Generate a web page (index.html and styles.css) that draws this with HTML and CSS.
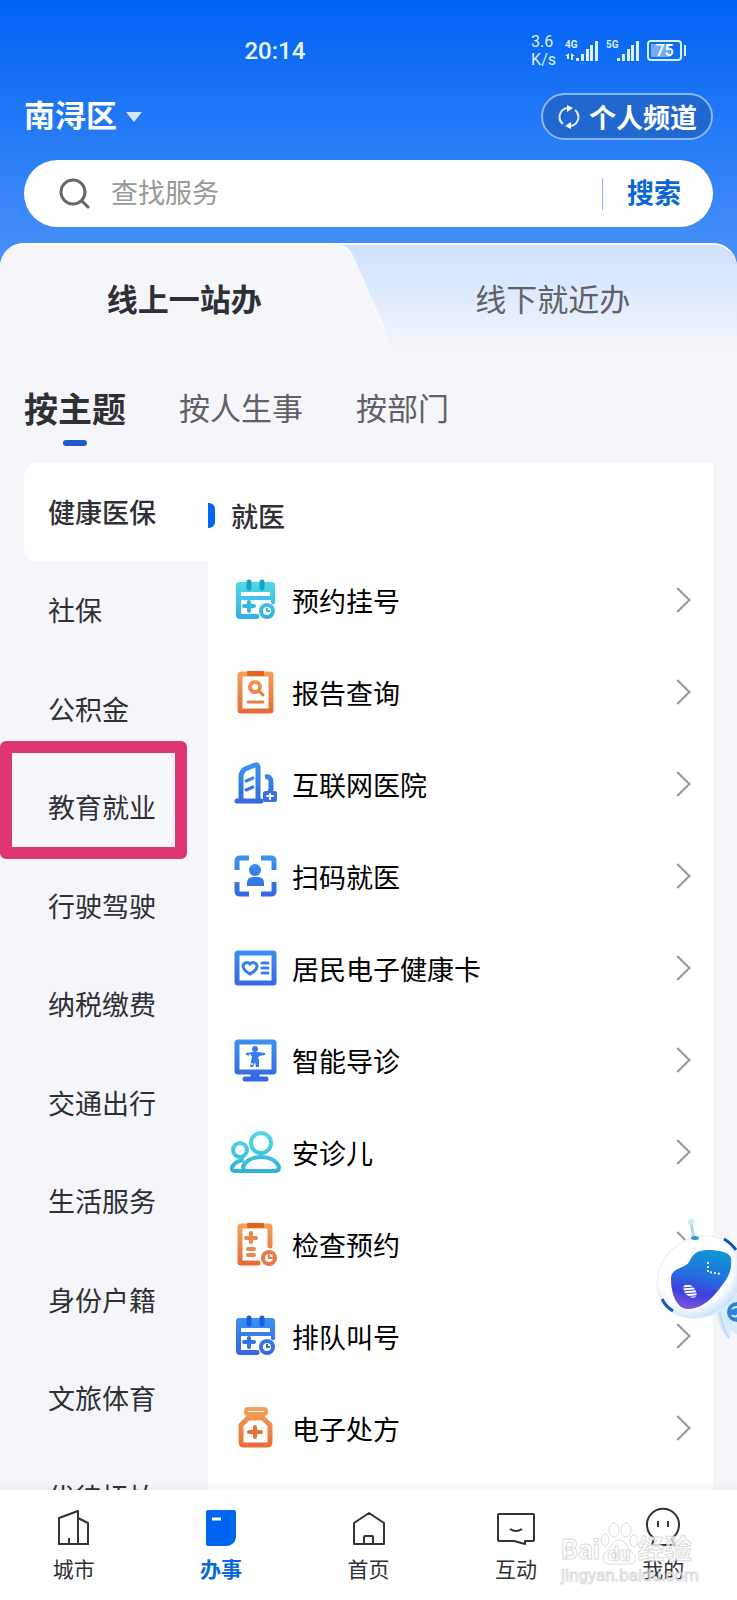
FILE: index.html
```html
<!DOCTYPE html>
<html lang="zh-CN">
<head>
    <meta charset="UTF-8">
    <meta name="viewport" content="width=device-width, initial-scale=1.0">
    <title>办事</title>
    <link rel="stylesheet" href="styles.css">
</head>
<body>
    <!-- Shared gradients and icon parts -->
    <svg class="defs" width="0" height="0" aria-hidden="true">
        <defs>
            <linearGradient id="cyan" gradientUnits="userSpaceOnUse" x1="0" y1="3" x2="0" y2="45">
                <stop offset="0" stop-color="#55dbe6"/><stop offset="1" stop-color="#2fb0dc"/>
            </linearGradient>
            <linearGradient id="orange" gradientUnits="userSpaceOnUse" x1="0" y1="3" x2="0" y2="45">
                <stop offset="0" stop-color="#f5a25a"/><stop offset="1" stop-color="#e8693a"/>
            </linearGradient>
            <linearGradient id="blue" gradientUnits="userSpaceOnUse" x1="0" y1="3" x2="0" y2="45">
                <stop offset="0" stop-color="#3a94ee"/><stop offset="1" stop-color="#3565e2"/>
            </linearGradient>
            <symbol id="calendar" viewBox="0 0 48 48">
                <path d="M8 6H41a3 3 0 0 1 3 3V25a2 2 0 0 1-4 2V24H10V38H26a2 2 0 0 1 0 5H9a4 4 0 0 1-4-4V9a3 3 0 0 1 3-3ZM10 16V20H39V16Z" fill-rule="evenodd"/>
                <path d="M18 26V35M13 30H23" stroke="currentColor" stroke-width="4" stroke-linecap="round"/>
                <circle cx="36" cy="35" r="8"/>
                <circle cx="36" cy="35" r="4" fill="#fff"/>
                <path d="M36 32V35H39" fill="none" stroke="currentColor" stroke-width="2"/>
            </symbol>
        </defs>
    </svg>

    <div class="app">
        <header class="header">
            <div class="status">
                <time class="clock">20:14</time>
                <div class="status-icons">
                    <div class="speed"><span>3.6</span><span>K/s</span></div>
                    <div class="signal">
                        <span>4G</span>
                        <svg width="34" height="24" viewBox="0 0 34 24" fill="#d9f1ff">
                            <path d="M0 17l4-3v6H2v-3ZM6 14l4 3H8v4H6Z"/>
                            <path d="M11 19h3v3h-3zM16 15h3v7h-3zM21 10h3v12h-3zM25 6h3v16h-3zM30 2h3v20h-3z"/>
                        </svg>
                    </div>
                    <div class="signal">
                        <span>5G</span>
                        <svg width="34" height="24" viewBox="0 0 34 24" fill="#d9f1ff">
                            <path d="M11 19h3v3h-3zM16 15h3v7h-3zM21 10h3v12h-3zM25 6h3v16h-3zM30 2h3v20h-3z"/>
                        </svg>
                    </div>
                    <div class="battery">75</div>
                </div>
            </div>

            <div class="location-row">
                <button class="location">南浔区</button>
                <button class="channel">
                    <svg width="22" height="26" viewBox="0 0 22 26" fill="none" stroke="#d9eaff" stroke-width="2">
                        <path d="M5 20A9 9 0 0 1 10 4M17 6A9 9 0 0 1 12 22"/>
                        <path d="M9 1l6 3-6 4ZM13 18l-6 4 6 3Z" fill="#fff" stroke="none"/>
                    </svg>
                    个人频道
                </button>
            </div>

            <form class="search">
                <svg width="32" height="32" viewBox="0 0 32 32" fill="none" stroke="#66666b" stroke-width="3" stroke-linecap="round">
                    <circle cx="14" cy="14" r="12"/><path d="M23 23l6 6"/>
                </svg>
                <input type="search" placeholder="查找服务" aria-label="查找服务">
                <button type="button">搜索</button>
            </form>
        </header>

        <main class="panel">
            <div class="tabs">
                <button class="tab active">
                    <svg class="slant" width="60" height="104" viewBox="0 0 60 104">
                        <path d="M0 0H4C13 0 17 5 20 12L60 104H0Z" fill="#f4f6fa"/>
                        <path d="M4 1C13 1 17 5 20 12L52 86" fill="none" stroke="#fff" stroke-width="2" stroke-opacity=".5"/>
                    </svg>
                    <span>线上一站办</span>
                </button>
                <button class="tab">线下就近办</button>
            </div>

            <div class="subtabs">
                <button class="subtab active">按主题</button>
                <button class="subtab">按人生事</button>
                <button class="subtab">按部门</button>
            </div>

            <div class="card">
                <ul class="side">
                    <li class="active"><a href="#">健康医保</a></li>
                    <li><a href="#">社保</a></li>
                    <li><a href="#">公积金</a></li>
                    <li class="marked"><a href="#">教育就业</a></li>
                    <li><a href="#">行驶驾驶</a></li>
                    <li><a href="#">纳税缴费</a></li>
                    <li><a href="#">交通出行</a></li>
                    <li><a href="#">生活服务</a></li>
                    <li><a href="#">身份户籍</a></li>
                    <li><a href="#">文旅体育</a></li>
                    <li><a href="#">优待抚恤</a></li>
                </ul>

                <section class="services">
                    <h2>就医</h2>
                    <a class="service" href="#">
                        <svg viewBox="0 0 48 48" fill="url(#cyan)" color="#32b9dd">
                            <use href="#calendar"/>
                            <path d="M18 6V12M31 6V12" stroke="#16a2c8" stroke-width="5" stroke-linecap="round"/>
                        </svg>
                        <span>预约挂号</span>
                    </a>
                    <a class="service" href="#">
                        <svg viewBox="0 0 48 48" fill="none" stroke="url(#orange)" stroke-width="5" stroke-linecap="round">
                            <rect x="9" y="6" width="31" height="37" rx="1"/>
                            <rect x="16" y="3" width="17" height="5" rx="1" fill="#e36420" stroke="none"/>
                            <circle cx="24" cy="19" r="5" stroke-width="4"/>
                            <path d="M28 23l4 4M17 34H32" stroke="#e98046" stroke-width="3"/>
                        </svg>
                        <span>报告查询</span>
                    </a>
                    <a class="service" href="#">
                        <svg viewBox="0 0 48 48" fill="none" stroke="url(#blue)" stroke-width="5" stroke-linecap="round" stroke-linejoin="round">
                            <path d="M10 40V16Q10 12 14 9L24 5Q27 4 27 8V40M6 41H30"/>
                            <path d="M15 21L22 18M15 30L22 27" stroke-width="3"/>
                            <path d="M34 17Q40 16 40 22V30" stroke-linecap="butt"/>
                            <path d="M35 31H37V29H42V31H44Q46 31 46 33V40Q46 42 44 42H34Q32 42 32 40V33Q32 31 35 31Z" fill="#3a6ee6" stroke="none"/>
                            <path d="M39 34V39M36 36H42" stroke="#fff" stroke-width="2"/>
                        </svg>
                        <span>互联网医院</span>
                    </a>
                    <a class="service" href="#">
                        <svg viewBox="0 0 48 48" fill="none" stroke="url(#blue)" stroke-width="5">
                            <path d="M18 6H9Q6 6 6 9V18M30 6H40Q43 6 43 9V18M6 30V39Q6 42 9 42H18M30 42H40Q43 42 43 39V30"/>
                            <g fill="url(#blue)" stroke="none">
                                <circle cx="24" cy="18" r="6"/>
                                <path d="M16 34V31Q16 25 22 25H27Q33 25 33 31V34Z"/>
                            </g>
                        </svg>
                        <span>扫码就医</span>
                    </a>
                    <a class="service" href="#">
                        <svg viewBox="0 0 48 48" fill="none" stroke="url(#blue)" stroke-width="5">
                            <rect x="6" y="9" width="37" height="30" rx="1"/>
                            <path d="M19 30Q12 26 12 22A4 4 0 0 1 19 20A4 4 0 0 1 26 22Q26 26 19 30Z" stroke-width="3"/>
                            <path d="M31 19H37M31 24H37M31 29H37" stroke="#3b7de9" stroke-width="3" stroke-linecap="round"/>
                        </svg>
                        <span>居民电子健康卡</span>
                    </a>
                    <a class="service" href="#">
                        <svg viewBox="0 0 48 48" fill="none" stroke="url(#blue)" stroke-width="5">
                            <rect x="6" y="6" width="37" height="30" rx="1"/>
                            <path d="M24 38V42" stroke="#3668e3" stroke-width="9"/>
                            <path d="M14 43H35" stroke="#3668e3" stroke-linecap="round"/>
                            <g fill="#377be9" stroke="none">
                                <circle cx="24" cy="13" r="3"/>
                                <path d="M15 17L22 16H27L34 17V19L28 20L28 31H25L24 26L22 31H19L21 20L15 19Z"/>
                                <circle cx="19" cy="19" r="1" fill="#fff"/>
                                <circle cx="28" cy="22" r="1" fill="#fff"/>
                                <circle cx="21" cy="28" r="1" fill="#fff"/>
                            </g>
                        </svg>
                        <span>智能导诊</span>
                    </a>
                    <a class="service" href="#">
                        <svg viewBox="0 0 48 48" fill="none" stroke="url(#cyan)" stroke-width="4">
                            <circle cx="30" cy="15" r="10"/>
                            <path d="M17 43H44Q48 43 48 39C46 33 39 29 30 29S14 33 12 39Q12 43 17 43Z"/>
                            <circle cx="9" cy="22" r="7"/>
                            <path d="M14 43H4Q0 43 1 39Q4 33 13 32"/>
                        </svg>
                        <span>安诊儿</span>
                    </a>
                    <a class="service" href="#">
                        <svg viewBox="0 0 48 48" fill="none" stroke="url(#orange)" stroke-width="5" stroke-linecap="round">
                            <path d="M27 43H10Q9 43 9 42V7Q9 6 10 6H38Q39 6 39 7V26"/>
                            <rect x="16" y="3" width="17" height="5" rx="1" fill="#e36420" stroke="none"/>
                            <path d="M20 13V22M15 18H25M17 29H23M17 35H23" stroke="#ea864a" stroke-width="4"/>
                            <circle cx="38" cy="38" r="8" fill="#ea7a44" stroke="none"/>
                            <circle cx="38" cy="38" r="4" fill="#fff" stroke="none"/>
                            <path d="M38 35V38H41" stroke="#ea7a44" stroke-width="2"/>
                        </svg>
                        <span>检查预约</span>
                    </a>
                    <a class="service" href="#">
                        <svg viewBox="0 0 48 48" fill="url(#blue)" color="#3870e6">
                            <use href="#calendar"/>
                            <path d="M18 6V12M31 6V12" stroke="#1f5bdc" stroke-width="5" stroke-linecap="round"/>
                        </svg>
                        <span>排队叫号</span>
                    </a>
                    <a class="service" href="#">
                        <svg viewBox="0 0 48 48" fill="none" stroke="url(#orange)" stroke-width="4" stroke-linejoin="round">
                            <rect x="15" y="5" width="20" height="5" rx="2"/>
                            <path d="M17 14H32L39 21V38Q39 41 36 41H13Q10 41 10 38V21Z" stroke-width="5"/>
                            <path d="M24 23V33M18 28H30" stroke="#e8703a" stroke-linecap="round"/>
                        </svg>
                        <span>电子处方</span>
                    </a>
                </section>
            </div>

            <!-- Floating assistant, half off screen -->
            <button class="robot" aria-label="智能助手">
                <svg width="82" height="134" viewBox="0 0 82 134">
                    <defs>
                        <radialGradient id="shell" cx=".5" cy=".4" r=".6">
                            <stop offset=".7" stop-color="#fff"/><stop offset="1" stop-color="#c5dffa"/>
                        </radialGradient>
                        <linearGradient id="face" x1=".6" y1="0" x2=".4" y2="1">
                            <stop offset="0" stop-color="#0d96d8"/><stop offset=".5" stop-color="#2867df"/>
                            <stop offset=".75" stop-color="#403fdc"/><stop offset="1" stop-color="#7855dc"/>
                        </linearGradient>
                        <pattern id="stripes" width="3" height="3" patternUnits="userSpaceOnUse" patternTransform="rotate(-50)">
                            <path d="M0 1H3" stroke="#fff" stroke-width="2"/>
                        </pattern>
                    </defs>
                    <path d="M58 84Q60 110 72 122L74 112L82 118V66Z" fill="#d9eafb"/>
                    <path d="M62 90Q65 110 72 120" fill="none" stroke="#c0daf6" stroke-width="2"/>
                    <circle cx="80" cy="94" r="10" fill="#2a83dc"/>
                    <path d="M75 91q5-4 7 0M75 97q4 4 7-2" fill="none" stroke="#d5ecff" stroke-width="2"/>
                    <path d="M37 22L34 4" stroke="#a9dcf1" stroke-width="3"/>
                    <circle cx="34" cy="4" r="3" fill="#c7eaf8"/>
                    <ellipse cx="43" cy="59" rx="45" ry="39" transform="rotate(-38 43 59)" fill="url(#shell)" stroke="#e3effc"/>
                    <ellipse cx="38" cy="20" rx="4" ry="2" fill="#399bd0"/>
                    <path d="M67 21Q74 25 79 32" fill="none" stroke="#1851b0" stroke-width="3"/>
                    <path d="M5 81Q9 89 16 93" fill="none" stroke="#1d5aa8" stroke-width="3"/>
                    <path d="M74 40C73 34 60 32 52 32C38 32 36 37 32 44C28 51 14 49 14 61C14 76 20 92 32 91C48 90 58 77 66 66C73 57 75 50 74 40Z" fill="url(#face)"/>
                    <path d="M51 44V54L64 56" fill="none" stroke="#dff5ff" stroke-width="2" stroke-dasharray="2 2"/>
                    <ellipse cx="33" cy="73" rx="8" ry="5" transform="rotate(45 33 73)" fill="url(#stripes)"/>
                </svg>
            </button>
        </main>

        <nav class="navbar">
            <a href="#">
                <svg viewBox="0 0 40 40">
                    <path d="M5 36V11L24 4V36M24 11L34 16V36M4 37H35M15 36V31"/>
                </svg>
                城市
            </a>
            <a class="active" href="#">
                <svg viewBox="0 0 40 40">
                    <path d="M7 3H33Q35 3 35 5V30Q34 38 26 39H7Q5 39 5 37V5Q5 3 7 3Z" fill="#0065ee" stroke="none"/>
                    <path d="M11 12H20" stroke="#fff" stroke-width="3"/>
                </svg>
                办事
            </a>
            <a href="#">
                <svg viewBox="0 0 40 40">
                    <path d="M5 37V16L20 6L35 16V37ZM15 37V30Q15 29 16 29H23Q24 29 24 30V37"/>
                </svg>
                首页
            </a>
            <a href="#">
                <svg viewBox="0 0 40 40">
                    <path d="M3 7H37Q38 7 38 8V33Q38 34 37 34H29V37L18 34H3Q2 34 2 33V8Q2 7 3 7ZM14 22Q20 26 26 22"/>
                </svg>
                互动
            </a>
            <a href="#">
                <svg viewBox="0 0 40 40">
                    <path d="M11 31A16 16 0 1 1 29 31L31 38H9ZM15 14V20M25 14V20"/>
                </svg>
                我的
            </a>
            <div class="watermark" aria-hidden="true">
                <div class="watermark-brand">
                    <span>Bai</span>
                    <span class="paw">
                        <svg width="38" height="44" viewBox="0 0 38 44">
                            <ellipse cx="5" cy="18" rx="4" ry="6"/><ellipse cx="14" cy="8" rx="5" ry="7"/>
                            <ellipse cx="26" cy="8" rx="5" ry="7"/><ellipse cx="34" cy="19" rx="4" ry="6"/>
                            <path d="M19 18C12 18 11 27 6 30C1 35 3 42 9 42H30C37 42 37 34 32 30C27 26 26 18 19 18Z"/>
                        </svg>
                        <b>du</b>
                    </span>
                    <span>经验</span>
                </div>
                <div class="watermark-url">jingyan.baidu.com</div>
            </div>
        </nav>
    </div>
</body>
</html>
```
FILE: styles.css
```css
* {
    margin: 0;
    padding: 0;
    box-sizing: border-box;
}

body {
    background-color: #f4f6fa;
    color: #2f3035;
    font-family: Roboto, 'Noto Sans CJK SC', sans-serif;
    font-size: 27px;
}

button,
input {
    font: inherit;
    color: inherit;
    background: none;
    border: none;
}

a {
    color: inherit;
    text-decoration: none;
}

.defs {
    position: absolute;
}

.app {
    height: 100vh;
    display: flex;
    flex-direction: column;
    overflow: hidden;
}

/* Header */
.header {
    background: linear-gradient(#0062f4, #4b92f8);
    color: #fff;
    padding: 0 24px 40px;
}

.status {
    height: 93px;
    display: flex;
    justify-content: space-between;
    align-items: center;
    padding: 8px 26px 0 32%;
}

.clock {
    font-size: 24px;
    font-weight: 500;
    line-height: 28px;
    color: #e6f8ff;
}

.status-icons {
    display: flex;
    align-items: center;
    gap: 7px;
    color: #d9f1ff;
}

.speed {
    display: flex;
    flex-direction: column;
    margin-right: 2px;
    font-size: 16px;
    line-height: 18px;
}

.signal {
    position: relative;
    height: 24px;
}

.signal svg {
    display: block;
}

.signal span {
    position: absolute;
    top: 0;
    left: 0;
    font-size: 10px;
    font-weight: bold;
    line-height: 12px;
}

.battery {
    position: relative;
    width: 35px;
    height: 21px;
    margin-right: 5px;
    border: 2px solid #d9f1ff;
    border-radius: 4px;
    background: linear-gradient(90deg, #75abfa 70%, transparent 70%) content-box;
    padding: 2px;
    color: #fff;
    font-size: 16px;
    font-weight: 500;
    line-height: 14px;
    text-align: center;
}

.battery::after {
    content: '';
    position: absolute;
    right: -6px;
    top: 3px;
    width: 2px;
    height: 11px;
    background: #d9f1ff;
}

.location-row {
    display: flex;
    justify-content: space-between;
    align-items: center;
    margin-bottom: 20px;
}

.location {
    display: flex;
    align-items: center;
    gap: 9px;
    font-size: 31px;
    font-weight: bold;
    line-height: 47px;
}

.location::after {
    content: '';
    border: 8px solid transparent;
    border-top: 10px solid #cfe6ff;
    border-bottom: 0;
}

.channel {
    display: flex;
    align-items: center;
    gap: 9px;
    height: 47px;
    padding: 0 14px 0 15px;
    border: 2px solid #86b7f7;
    border-radius: 24px;
    background: #2067cf;
    font-weight: bold;
}

.search {
    display: flex;
    align-items: center;
    height: 67px;
    padding: 0 8px 0 35px;
    border-radius: 34px;
    background: #fff;
}

.search input {
    flex: 1;
    min-width: 0;
    margin-left: 20px;
    outline: none;
}

.search input::placeholder {
    color: #999;
}

.search button {
    height: 32px;
    padding: 0 24px;
    border-left: 1px solid #8db8ef;
    color: #0a66d4;
    font-weight: bold;
    line-height: 32px;
}

/* Content */
.panel {
    position: relative;
    flex: 1;
    min-height: 0;
    display: flex;
    flex-direction: column;
    margin-top: -24px;
    border-radius: 24px 24px 0 0;
    background: #f4f6fa;
    overflow: hidden;
}

.tabs {
    display: flex;
    flex-shrink: 0;
    height: 106px;
    border-top: 2px solid #fff;
    border-radius: 24px 24px 0 0;
    background: linear-gradient(#cfe1fb, #dbe8fd 40%, #f4f6fa);
}

.tab {
    position: relative;
    flex: 1;
    font-size: 31px;
    color: #606166;
}

.tab.active {
    color: #2f3035;
    font-weight: bold;
}

.tab.active::before {
    content: '';
    position: absolute;
    inset: 0 36px 0 0;
    background: #f4f6fa;
}

.tab span {
    position: relative;
}

.slant {
    position: absolute;
    top: 0;
    right: -24px;
}

.subtabs {
    display: flex;
    flex-shrink: 0;
    align-items: center;
    gap: 53px;
    height: 114px;
    padding: 8px 24px 0;
}

.subtab {
    position: relative;
    font-size: 31px;
    line-height: 48px;
    color: #606166;
}

.subtab.active {
    font-size: 34px;
    font-weight: bold;
    color: #2f3035;
}

.subtab.active::after {
    content: '';
    position: absolute;
    left: 50%;
    bottom: -12px;
    width: 24px;
    height: 6px;
    margin-left: -12px;
    border-radius: 3px;
    background: #2457c8;
}

.card {
    display: flex;
    align-items: flex-start;
    margin: 0 24px;
}

.side {
    width: 184px;
    list-style: none;
    display: grid;
    grid-auto-rows: 98px 99px;
}

.side li {
    position: relative;
    padding: 0 0 2px 24px;
    display: flex;
    align-items: center;
}

.side .active {
    background: #fff;
    border-radius: 12px 0 0 12px;
    font-weight: 500;
}

/* Highlight frame around one category */
.marked::after {
    content: '';
    position: absolute;
    inset: -17px 21px -2px -24px;
    border: 12px solid #dc3571;
    border-radius: 6px;
}

.services {
    flex: 1;
    align-self: stretch;
    background: #fff;
    border-radius: 0 4px 0 0;
}

.services h2 {
    position: relative;
    height: 91px;
    padding: 20px 0 0 23px;
    font-size: 27px;
    font-weight: 500;
    line-height: 71px;
}

.services h2::before {
    content: '';
    position: absolute;
    left: 0;
    top: 40px;
    width: 7px;
    height: 25px;
    border-radius: 0 6px 6px 0;
    background: #0065f2;
}

.service {
    display: flex;
    align-items: center;
    height: 92px;
    padding: 0 26px 0 23px;
    color: #000;
}

.service svg {
    width: 48px;
    height: 48px;
    margin-right: 13px;
    overflow: visible;
}

.service::after {
    content: '';
    width: 16px;
    height: 16px;
    margin-left: auto;
    border: solid #999;
    border-width: 2px 2px 0 0;
    transform: rotate(45deg);
}

.robot {
    position: absolute;
    right: -2px;
    bottom: 138px;
}

.robot svg {
    display: block;
    overflow: visible;
}

/* Bottom bar */
.navbar {
    position: relative;
    display: flex;
    flex-shrink: 0;
    height: 110px;
    background: #fff;
    box-shadow: 0 -2px 10px rgba(0, 0, 0, 0.06);
}

.navbar a {
    flex: 1;
    display: flex;
    flex-direction: column;
    align-items: center;
    gap: 7px;
    padding-top: 17px;
    font-size: 21px;
    line-height: 32px;
}

.navbar svg {
    fill: none;
    stroke: #333;
    stroke-width: 2;
    stroke-linejoin: round;
}

.navbar a svg {
    width: 40px;
    height: 40px;
}

.navbar .active {
    color: #0a66dd;
    font-weight: bold;
}

.watermark {
    position: absolute;
    right: 38px;
    bottom: 16px;
    color: #fff;
    opacity: 0.8;
    -webkit-text-stroke: 1px #d4d4d4;
}

.watermark-brand {
    display: flex;
    align-items: flex-end;
    font-size: 27px;
    font-weight: bold;
    line-height: 32px;
}

.paw {
    position: relative;
}

.navbar .paw svg {
    display: block;
    fill: #fff;
    stroke: #d4d4d4;
    stroke-width: 1;
}

.paw b {
    position: absolute;
    left: 8px;
    bottom: 0;
    font-size: 20px;
    line-height: 24px;
}

.watermark-url {
    font-size: 17px;
    line-height: 18px;
}
```
